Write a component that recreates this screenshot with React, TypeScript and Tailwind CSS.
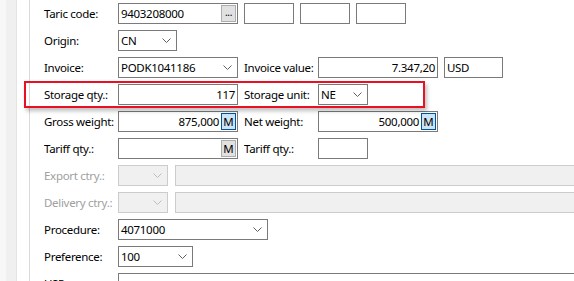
import React from "react";

const font = { fontFamily: '"Noto Sans", "Open Sans", sans-serif' };

function Chevron({ color = "#606060" }: { color?: string }) {
  return (
    <svg width="9" height="5" viewBox="0 0 9 5" className="shrink-0">
      <path d="M0.5 0.5 L4.5 4.5 L8.5 0.5" fill="none" stroke={color} strokeWidth="1" />
    </svg>
  );
}

function Label({ children, w = "w-[74px]", disabled = false }: { children: React.ReactNode; w?: string; disabled?: boolean }) {
  return (
    <div className={`${w} shrink-0 text-[11.5px] tracking-[-0.3px] leading-[21px] whitespace-nowrap ${disabled ? "text-[#a0a0a0]" : "text-black"}`}>
      {children}
    </div>
  );
}

function Box({ w, children, right = false, className = "" }: { w: string; children?: React.ReactNode; right?: boolean; className?: string }) {
  return (
    <div
      className={`${w} h-[21px] shrink-0 border border-[#7a7a7a] bg-white flex items-center text-[11.5px] tracking-[-0.3px] text-black px-[2px] ${right ? "justify-end" : ""} ${className}`}
    >
      {children}
    </div>
  );
}

function Select({ w, value, disabled = false }: { w: string; value?: string; disabled?: boolean }) {
  return (
    <div
      className={`${w} h-[21px] shrink-0 border flex items-center justify-between text-[11.5px] tracking-[-0.3px] pl-[2px] pr-[5px] ${
        disabled ? "border-[#cccccc] bg-[#f0f0f0]" : "border-[#7a7a7a] bg-white text-black"
      }`}
    >
      <span>{value}</span>
      <Chevron color={disabled ? "#bcbcbc" : "#606060"} />
    </div>
  );
}

function MBtn({ active = false }: { active?: boolean }) {
  return (
    <div
      className={`w-[15px] h-[17px] shrink-0 border flex items-center justify-center text-[11.5px] tracking-normal ml-[2px] ${
        active ? "bg-[#cce4f7] border-[#005499] text-black" : "bg-[#e1e1e1] border-[#adadad] text-black"
      }`}
    >
      M
    </div>
  );
}

function Row({ children }: { children: React.ReactNode }) {
  return <div className="h-[21px] flex items-center">{children}</div>;
}

export default function App() {
  return (
    <div className="w-[574px] h-[281px] overflow-hidden bg-white flex relative" style={font}>
      <div className="w-[6px] shrink-0 bg-[#f7f7f7]" />
      <div className="w-[11px] shrink-0 bg-[#f0f0f0] border-r border-[#e3e3e3]" />
      <div className="w-[13px] shrink-0 bg-white border-r border-[#d9d9d9]" />
      <div className="flex-1 pl-[14px] pt-[3px] flex flex-col gap-[6px]">
        <Row>
          <Label>Taric code:</Label>
          <Box w="w-[120px]" className="justify-between pr-[1px]">
            <span>9403208000</span>
            <div className="w-[15px] h-[17px] bg-[#e1e1e1] border border-[#adadad] flex items-center justify-center text-[10px] leading-none pb-[4px]">
              ...
            </div>
          </Box>
          <div className="w-[6px]" />
          <Box w="w-[50px]" />
          <div className="w-[6px]" />
          <Box w="w-[50px]" />
          <div className="w-[6px]" />
          <Box w="w-[50px]" />
        </Row>
        <Row>
          <Label>Origin:</Label>
          <Select w="w-[59px]" value="CN" />
        </Row>
        <Row>
          <Label>Invoice:</Label>
          <Select w="w-[120px]" value="PODK1041186" />
          <div className="w-[6px]" />
          <Label>Invoice value:</Label>
          <Box w="w-[120px]" right>
            7.347,20
          </Box>
          <div className="w-[6px]" />
          <Box w="w-[59px]">USD</Box>
        </Row>
        <Row>
          <Label>Storage qty.:</Label>
          <Box w="w-[120px]" right>
            117
          </Box>
          <div className="w-[6px]" />
          <Label>Storage unit:</Label>
          <Select w="w-[50px]" value="NE" />
        </Row>
        <Row>
          <Label>Gross weight:</Label>
          <Box w="w-[120px]" right className="pr-[1px]">
            <span>875,000</span>
            <MBtn active />
          </Box>
          <div className="w-[6px]" />
          <Label>Net weight:</Label>
          <Box w="w-[120px]" right className="pr-[1px]">
            <span>500,000</span>
            <MBtn active />
          </Box>
        </Row>
        <Row>
          <Label>Tariff qty.:</Label>
          <Box w="w-[120px]" right className="pr-[1px]">
            <MBtn />
          </Box>
          <div className="w-[6px]" />
          <Label>Tariff qty.:</Label>
          <Box w="w-[50px]" />
        </Row>
        <Row>
          <Label disabled>Export ctry.:</Label>
          <Select w="w-[50px]" disabled />
          <div className="w-[7px]" />
          <div className="flex-1 h-[21px] border border-[#cccccc] bg-[#f0f0f0] mr-[-4px]" />
        </Row>
        <Row>
          <Label disabled>Delivery ctry.:</Label>
          <Select w="w-[50px]" disabled />
          <div className="w-[7px]" />
          <div className="flex-1 h-[21px] border border-[#cccccc] bg-[#f0f0f0] mr-[-4px]" />
        </Row>
        <Row>
          <Label>Procedure:</Label>
          <Select w="w-[150px]" value="4071000" />
        </Row>
        <Row>
          <Label>Preference:</Label>
          <Select w="w-[75px]" value="100" />
        </Row>
        <Row>
          <Label>USP:</Label>
          <div className="flex-1 h-[21px] border border-[#7a7a7a] bg-white mr-[-4px]" />
        </Row>
      </div>
      <div className="absolute left-[24px] top-[81px] w-[401px] h-[27px] border-2 border-[#e81123] shadow-[2px_3px_4px_rgba(0,0,0,0.25)] pointer-events-none" />
    </div>
  );
}
